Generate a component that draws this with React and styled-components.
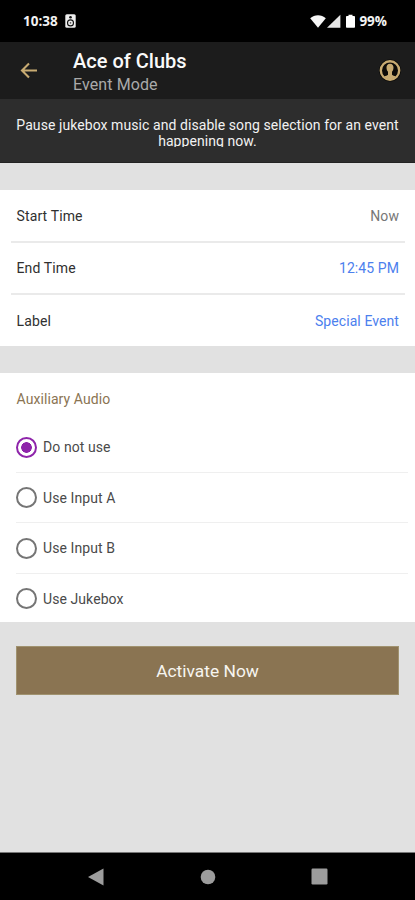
import { useState } from 'react';
import styled, { createGlobalStyle, ThemeProvider } from 'styled-components';

const theme = {
  black: '#000000',
  header: '#1c1c1c',
  banner: '#2d2d2d',
  page: '#e1e1e1',
  white: '#ffffff',
  brown: '#8a7452',
  blue: '#4c80ee',
  purple: '#8e24aa',
};

const GlobalStyle = createGlobalStyle`
  * {
    box-sizing: border-box;
  }

  body {
    margin: 0;
    font-family: Roboto, "Liberation Sans", sans-serif;
  }
`;

const Screen = styled.div`
  display: flex;
  flex-direction: column;
  height: 900px;
  background-color: ${props => props.theme.page};
`;

const StatusBar = styled.div`
  display: flex;
  justify-content: space-between;
  align-items: center;
  height: 42px;
  padding: 0 28px 0 23px;
  background-color: ${props => props.theme.black};
  color: #f2f2f2;
  font-family: "Open Sans", Roboto, sans-serif;
  font-size: 13.5px;
  font-weight: 700;
`;

const StatusGroup = styled.div`
  display: flex;
  align-items: center;
  gap: ${props => props.$gap};
`;

const Header = styled.header`
  display: flex;
  align-items: center;
  height: 57px;
  padding: 0 14px 0 20px;
  background-color: ${props => props.theme.header};
`;

const IconButton = styled.button`
  display: flex;
  padding: 0;
  border: none;
  background: none;
`;

const Titles = styled.div`
  flex: 1;
  margin-left: 35px;
  padding-top: 3px;
`;

const Title = styled.h1`
  margin: 0;
  color: #fafafa;
  font-size: 20px;
  line-height: 24px;
  font-weight: 500;
`;

const Subtitle = styled.div`
  color: #aaaaaa;
  font-size: 16px;
  line-height: 23px;
  letter-spacing: 0.1px;
`;

const Banner = styled.div`
  height: 64px;
  padding: 18px 10px 0;
  background-color: ${props => props.theme.banner};
  border-bottom: 1px solid #222222;
`;

const BannerText = styled.p`
  height: 30px;
  margin: 0;
  overflow: hidden;
  color: #f2f2f2;
  font-size: 14px;
  line-height: 16px;
  letter-spacing: 0.07px;
  text-align: center;
`;

const Panel = styled.section`
  margin-top: ${props => props.$top};
  height: ${props => props.$height};
  background-color: ${props => props.theme.white};
`;

const DetailRow = styled.div`
  display: flex;
  align-items: center;
  justify-content: space-between;
  height: ${props => (props.$last ? '51px' : '52.5px')};
  margin: 0 10px 0 11px;
  padding: 1px 6px 0 5.5px;
  border-bottom: ${props => (props.$last ? 'none' : '2px solid #eaeaea')};
  font-size: 14px;
`;

const DetailLabel = styled.span`
  color: #303030;
  letter-spacing: 0.13px;
`;

const DetailValue = styled.span`
  color: ${props => (props.$editable ? props.theme.blue : '#777777')};
  letter-spacing: 0.08px;
`;

const PanelTitle = styled.h2`
  margin: 0;
  padding: 17px 16.5px 0;
  height: 49px;
  color: ${props => props.theme.brown};
  font-size: 14px;
  line-height: 18px;
  font-weight: 400;
  letter-spacing: 0.08px;
`;

const OptionRow = styled.label`
  display: flex;
  align-items: center;
  gap: 6px;
  height: ${props => (props.$last ? '49.5px' : '50.5px')};
  margin: 0 7px 0 16px;
  padding-top: 1px;
  border-bottom: ${props => (props.$last ? 'none' : '1px solid #efefef')};
  color: #4a4a4a;
  font-size: 14px;
  letter-spacing: 0.08px;
`;

const Radio = styled.input`
  appearance: none;
  flex: none;
  width: 21px;
  height: 21px;
  margin: 0;
  border: 2px solid #757575;
  border-radius: 50%;

  &:checked {
    border-color: ${props => props.theme.purple};
    background: radial-gradient(circle, ${props => props.theme.purple} 5px, transparent 5.6px);
  }
`;

const ActivateButton = styled.button`
  height: 49px;
  margin: 24px 16px 0;
  border: 1px solid #a0926f;
  background-color: ${props => props.theme.brown};
  color: #f7f5f0;
  font-family: inherit;
  font-size: 17.4px;
`;

const NavBar = styled.nav`
  display: flex;
  align-items: center;
  justify-content: space-between;
  height: 48px;
  margin-top: auto;
  padding: 0 87px;
  border-top: 1px solid #777777;
  background-color: ${props => props.theme.black};
`;

const details = [
  { label: 'Start Time', value: 'Now' },
  { label: 'End Time', value: '12:45 PM', editable: true },
  { label: 'Label', value: 'Special Event', editable: true },
];

const audioOptions = ['Do not use', 'Use Input A', 'Use Input B', 'Use Jukebox'];

function SpeakerIcon() {
  return (
    <svg width="11" height="14" viewBox="0 0 11 14">
      <rect x="0.3" y="0.3" width="10.4" height="13.4" rx="1.5" fill="#eee" />
      <circle cx="5.5" cy="3.2" r="1.3" fill="#111" />
      <circle cx="5.5" cy="8.9" r="3" fill="none" stroke="#111" strokeWidth="1.1" />
      <circle cx="5.5" cy="8.9" r="0.8" fill="#555" />
    </svg>
  );
}

function SignalIcons() {
  return (
    <svg width="46" height="15" viewBox="0 0 46 15">
      <path d="M0.2 4.2C4.5 0.1 11.5 0.1 15.8 4.2L8 13.7Z" fill="#f5f5f5" />
      <path d="M17 13.8L30.4 0.7V13.8Z" fill="#e8e8e8" />
      <path d="M36.8 2.1H38.5V0.7H42.5V2.1H44.2Q45 2.1 45 3V13Q45 13.8 44.2 13.8H36.8Q36 13.8 36 13V3Q36 2.1 36.8 2.1Z" fill="#fff" />
    </svg>
  );
}

function BackArrow() {
  return (
    <svg width="18" height="18" viewBox="0 0 18 18" fill="none" stroke="#c8ab72" strokeWidth="2.1">
      <path d="M17 8.5H2.4M9 1.4L2 8.5L9 15.6" />
    </svg>
  );
}

function ProfileIcon() {
  return (
    <svg width="23" height="23" viewBox="0 0 23 23">
      <circle cx="12" cy="11.5" r="10.9" fill="#090806" />
      <circle cx="12" cy="11.5" r="9.2" fill="#0d0b08" stroke="#c8ab72" strokeWidth="2.4" />
      <path
        d="M12 4.8C9.6 4.8 8.4 6.5 8.5 8.8C8.6 10.8 9.2 12 10 12.8V15.8C9.2 16.7 7.8 16.9 6.2 17.2C9.2 21 14.8 21 17.8 17.2C16.2 16.9 14.8 16.7 14 15.8V12.8C14.8 12 15.4 10.8 15.5 8.8C15.6 6.5 14.4 4.8 12 4.8Z"
        fill="#c8ab72"
      />
    </svg>
  );
}

function App() {
  const [audio, setAudio] = useState('Do not use');

  return (
    <ThemeProvider theme={theme}>
      <GlobalStyle />
      <Screen>
        <StatusBar>
          <StatusGroup $gap="7px">
            10:38
            <SpeakerIcon />
          </StatusGroup>
          <StatusGroup $gap="3px">
            <SignalIcons />
            99%
          </StatusGroup>
        </StatusBar>
        <Header>
          <IconButton aria-label="Back">
            <BackArrow />
          </IconButton>
          <Titles>
            <Title>Ace of Clubs</Title>
            <Subtitle>Event Mode</Subtitle>
          </Titles>
          <IconButton aria-label="Profile">
            <ProfileIcon />
          </IconButton>
        </Header>
        <Banner>
          <BannerText>
            Pause jukebox music and disable song selection for an event happening now.
          </BannerText>
        </Banner>
        <Panel $top="27px" $height="156px">
          {details.map((item, i) => (
            <DetailRow key={item.label} $last={i === details.length - 1}>
              <DetailLabel>{item.label}</DetailLabel>
              <DetailValue $editable={item.editable}>{item.value}</DetailValue>
            </DetailRow>
          ))}
        </Panel>
        <Panel $top="27px" $height="249px">
          <PanelTitle>Auxiliary Audio</PanelTitle>
          {audioOptions.map((option, i) => (
            <OptionRow key={option} $last={i === audioOptions.length - 1}>
              <Radio
                type="radio"
                name="audio"
                checked={audio === option}
                onChange={() => setAudio(option)}
              />
              {option}
            </OptionRow>
          ))}
        </Panel>
        <ActivateButton>Activate Now</ActivateButton>
        <NavBar>
          <svg width="17" height="18" viewBox="0 0 17 18">
            <path d="M1 9L16.5 0.5V17.5Z" fill="#9c9c9c" />
          </svg>
          <svg width="16" height="16" viewBox="0 0 16 16">
            <circle cx="8" cy="8" r="7.3" fill="#9c9c9c" />
          </svg>
          <svg width="17" height="17" viewBox="0 0 17 17">
            <rect x="0.5" y="0.5" width="16" height="16" rx="1.2" fill="#9c9c9c" />
          </svg>
        </NavBar>
      </Screen>
    </ThemeProvider>
  );
}

export default App;
